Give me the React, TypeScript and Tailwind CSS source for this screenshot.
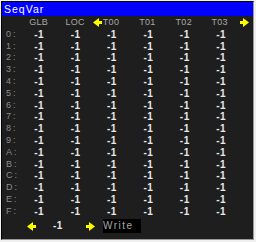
import React from "react";

const rows = ["0", "1", "2", "3", "4", "5", "6", "7", "8", "9", "A", "B", "C", "D", "E", "F"];

function LeftArrow() {
  return (
    <svg width="9" height="9" viewBox="0 0 9 9" className="block shrink-0">
      <polygon points="0,4.5 6,0 6,9" fill="#ffff00" />
      <rect x="6" y="3" width="3" height="3" fill="#ffff00" />
    </svg>
  );
}

function RightArrow() {
  return (
    <svg width="9" height="9" viewBox="0 0 9 9" className="block shrink-0">
      <polygon points="9,4.5 3,0 3,9" fill="#ffff00" />
      <rect x="0" y="3" width="3" height="3" fill="#ffff00" />
    </svg>
  );
}

export default function App() {
  return (
    <div className="w-[256px] h-[242px] bg-[#f0f0f0] pt-[1px] pl-[1px] font-['Liberation_Sans',Arial,sans-serif]">
      <div className="w-[253px] h-[239px] border-l border-t border-r border-b border-l-black border-t-black border-r-[#9a9a9a] border-b-[#9a9a9a] bg-[#1e1e1e] flex flex-col">
        <div className="h-[14px] bg-[#0000ff] text-white text-[10.5px] leading-[14px] pl-[2px] tracking-[1px]">
          SeqVar
        </div>
        <div className="pt-[1px] flex flex-col">
          <div className="grid grid-cols-[19px_repeat(6,36.4px)_1fr] h-[11.8px] items-center text-[9px] leading-[11.8px] tracking-[0.3px] text-[#a8a8a8]">
            <div />
            <div className="text-center pr-[1px]">GLB</div>
            <div className="text-center pr-[1px]">LOC</div>
            <div className="flex items-center -ml-[1px]">
              <LeftArrow />
              <span className="ml-[1px]">T00</span>
            </div>
            <div className="text-center pr-[2px]">T01</div>
            <div className="text-center pr-[2px]">T02</div>
            <div className="text-center pr-[3px]">T03</div>
            <div className="flex items-center pl-[1px]">
              <RightArrow />
            </div>
          </div>
          {rows.map((r) => (
            <div
              key={r}
              className="grid grid-cols-[19px_repeat(6,36.4px)_1fr] h-[11.8px] items-center leading-[11.8px]"
            >
              <div className="pl-[4px] text-[9px] tracking-[2px] text-[#8c8c8c]">{r}:</div>
              {[0, 1, 2, 3, 4, 5].map((c) => (
                <div key={c} className="text-center text-[10px] font-bold tracking-[0.5px] text-[#e8e8e8]">
                  -1
                </div>
              ))}
              <div />
            </div>
          ))}
          <div className="flex items-center h-[14px] mt-[1.5px] pl-[25px]">
            <LeftArrow />
            <span className="ml-[17px] text-[10px] font-bold tracking-[0.5px] text-[#e8e8e8] leading-none">-1</span>
            <span className="ml-[23px]">
              <RightArrow />
            </span>
            <div className="ml-[8px] w-[38px] h-[14px] bg-black text-[#a8a8a8] text-[10px] leading-[14px] tracking-[1.5px]">
              Write
            </div>
          </div>
        </div>
      </div>
    </div>
  );
}
